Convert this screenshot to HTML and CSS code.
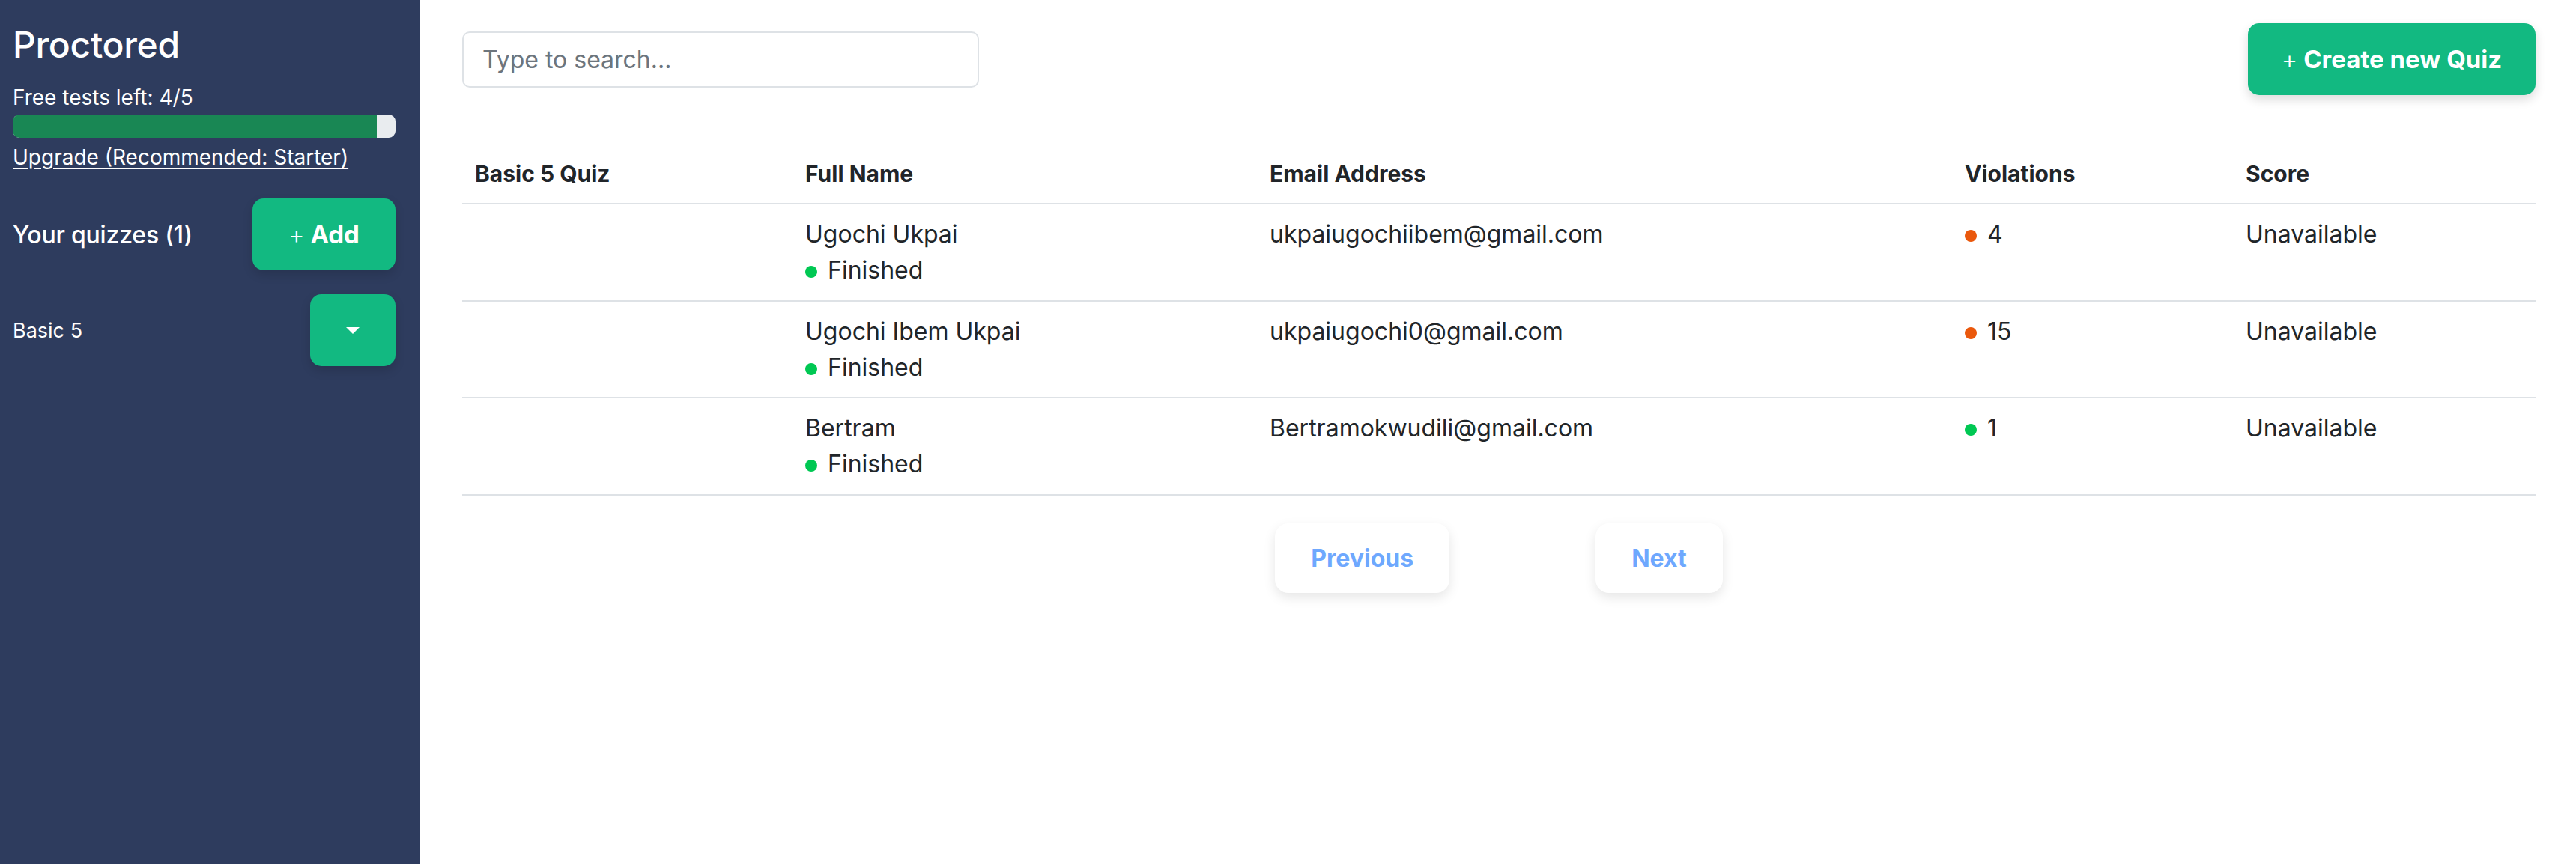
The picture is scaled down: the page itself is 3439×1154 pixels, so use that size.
FILE: index.html
```html
<!DOCTYPE html>
<html lang="en">
<head>
<meta charset="utf-8">
<title>Proctored</title>
<link rel="stylesheet" href="styles.css">
</head>
<body>
<div class="app">
  <aside class="sidebar">
    <h1 class="brand">Proctored</h1>
    <p class="free-tests">Free tests left: 4/5</p>
    <div class="progress"><div class="progress-fill" style="width: 95.1%"></div></div>
    <a class="upgrade" href="#">Upgrade (Recommended: Starter)</a>
    <div class="quiz-head">
      <span class="quiz-title">Your quizzes (1)</span>
      <button class="btn-green btn-add"><span class="plus">+</span> Add</button>
    </div>
    <div class="quiz-item">
      <span class="quiz-name">Basic 5</span>
      <button class="btn-green btn-drop"><span class="caret"></span></button>
    </div>
  </aside>
  <main class="main">
    <div class="topbar">
      <input class="search" type="text" placeholder="Type to search...">
      <button class="btn-green btn-create"><span class="plus">+</span> Create new Quiz</button>
    </div>
    <table class="results">
      <colgroup>
        <col class="c1"><col class="c2"><col class="c3"><col class="c4"><col class="c5">
      </colgroup>
      <thead>
        <tr><th>Basic 5 Quiz</th><th>Full Name</th><th>Email Address</th><th>Violations</th><th>Score</th></tr>
      </thead>
      <tbody>
        <tr>
          <td></td>
          <td>Ugochi Ukpai<br><span class="dot dot-green"></span>Finished</td>
          <td>ukpaiugochiibem@gmail.com</td>
          <td><span class="dot dot-orange"></span>4</td>
          <td>Unavailable</td>
        </tr>
        <tr>
          <td></td>
          <td>Ugochi Ibem Ukpai<br><span class="dot dot-green"></span>Finished</td>
          <td>ukpaiugochi0@gmail.com</td>
          <td><span class="dot dot-orange"></span>15</td>
          <td>Unavailable</td>
        </tr>
        <tr>
          <td></td>
          <td>Bertram<br><span class="dot dot-green"></span>Finished</td>
          <td>Bertramokwudili@gmail.com</td>
          <td><span class="dot dot-green"></span>1</td>
          <td>Unavailable</td>
        </tr>
      </tbody>
    </table>
    <div class="pager">
      <button class="btn-page">Previous</button>
      <button class="btn-page">Next</button>
    </div>
  </main>
</div>
</body>
</html>
```
FILE: styles.css
```css
* { box-sizing: border-box; }
html, body { margin: 0; padding: 0; }
body {
  font-family: Inter, "Noto Sans", "Liberation Sans", sans-serif;
  color: #212529;
  background: #ffffff;
}
.app {
  display: flex;
  min-height: 1154px;
}
.sidebar {
  width: 561px;
  flex: 0 0 561px;
  background: #2e3c5e;
  color: #ffffff;
  padding: 30px 33px 0 17px;
}
.brand {
  margin: 0;
  font-size: 48px;
  line-height: 60px;
  font-weight: 500;
  letter-spacing: -0.3px;
}
.free-tests {
  margin: 19px 0 0;
  font-size: 28px;
  line-height: 42px;
}
.progress {
  margin-top: 2px;
  height: 31px;
  background: #e9ecef;
  border-radius: 9px;
  overflow: hidden;
}
.progress-fill {
  height: 100%;
  background: #198754;
}
.upgrade {
  display: block;
  margin-top: 5px;
  font-size: 28px;
  line-height: 42px;
  color: #ffffff;
  text-decoration: underline;
  text-underline-offset: 4px;
}
.quiz-head {
  margin-top: 34px;
  display: flex;
  align-items: center;
  justify-content: space-between;
}
.quiz-title {
  font-size: 32px;
  font-weight: 500;
  letter-spacing: -0.2px;
}
.quiz-item {
  margin-top: 32px;
  display: flex;
  align-items: center;
  justify-content: space-between;
}
.quiz-name {
  font-size: 27px;
}
.btn-green {
  border: none;
  background: #12b981;
  color: #ffffff;
  font-family: inherit;
  font-size: 33px;
  font-weight: 700;
  height: 96px;
  border-radius: 15px;
  padding: 0 52px;
  box-shadow: 0 6px 14px rgba(0, 0, 0, 0.14);
  cursor: pointer;
}
.plus { font-weight: 300; }
.btn-add { width: 191px; padding: 0; }
.btn-drop {
  width: 114px;
  padding: 0;
  display: flex;
  align-items: center;
  justify-content: center;
}
.caret {
  width: 0;
  height: 0;
  border-left: 9px solid transparent;
  border-right: 9px solid transparent;
  border-top: 9px solid #ffffff;
}
.main {
  flex: 1;
  padding: 31px 54px 0 56px;
}
.topbar {
  display: flex;
  align-items: center;
  justify-content: space-between;
}
.search {
  width: 690px;
  height: 75px;
  border: 2px solid #dee2e6;
  border-radius: 10px;
  padding: 0 25px;
  font-family: inherit;
  font-size: 32px;
  color: #212529;
  outline: none;
}
.search::placeholder { color: #6c757d; }
.btn-create { width: 384px; padding: 0; }
.results {
  margin-top: 67px;
  width: 100%;
  border-collapse: collapse;
  table-layout: fixed;
}
.c1 { width: 441px; }
.c2 { width: 620px; }
.c3 { width: 928px; }
.c4 { width: 375px; }
.results th {
  text-align: left;
  font-size: 30px;
  line-height: 45px;
  font-weight: 700;
  padding: 16px 17px;
  border-bottom: 2px solid #dee2e6;
}
.results td {
  font-size: 32px;
  line-height: 48px;
  padding: 16px 17px 15.5px;
  vertical-align: top;
  border-bottom: 2px solid #dee2e6;
}
.dot {
  display: inline-block;
  width: 16px;
  height: 16px;
  border-radius: 50%;
  margin-right: 14px;
  vertical-align: 1px;
}
.dot-green { background: #00c853; }
.dot-orange { background: #ea580c; }
.pager {
  margin-top: 37px;
  display: flex;
  justify-content: center;
  gap: 195px;
}
.btn-page {
  height: 93px;
  padding: 0 48px;
  border: none;
  background: #ffffff;
  color: #6ea8fe;
  font-family: inherit;
  font-size: 32px;
  font-weight: 700;
  border-radius: 18px;
  box-shadow: 0 6px 16px rgba(0, 0, 0, 0.1);
  cursor: pointer;
}
```
